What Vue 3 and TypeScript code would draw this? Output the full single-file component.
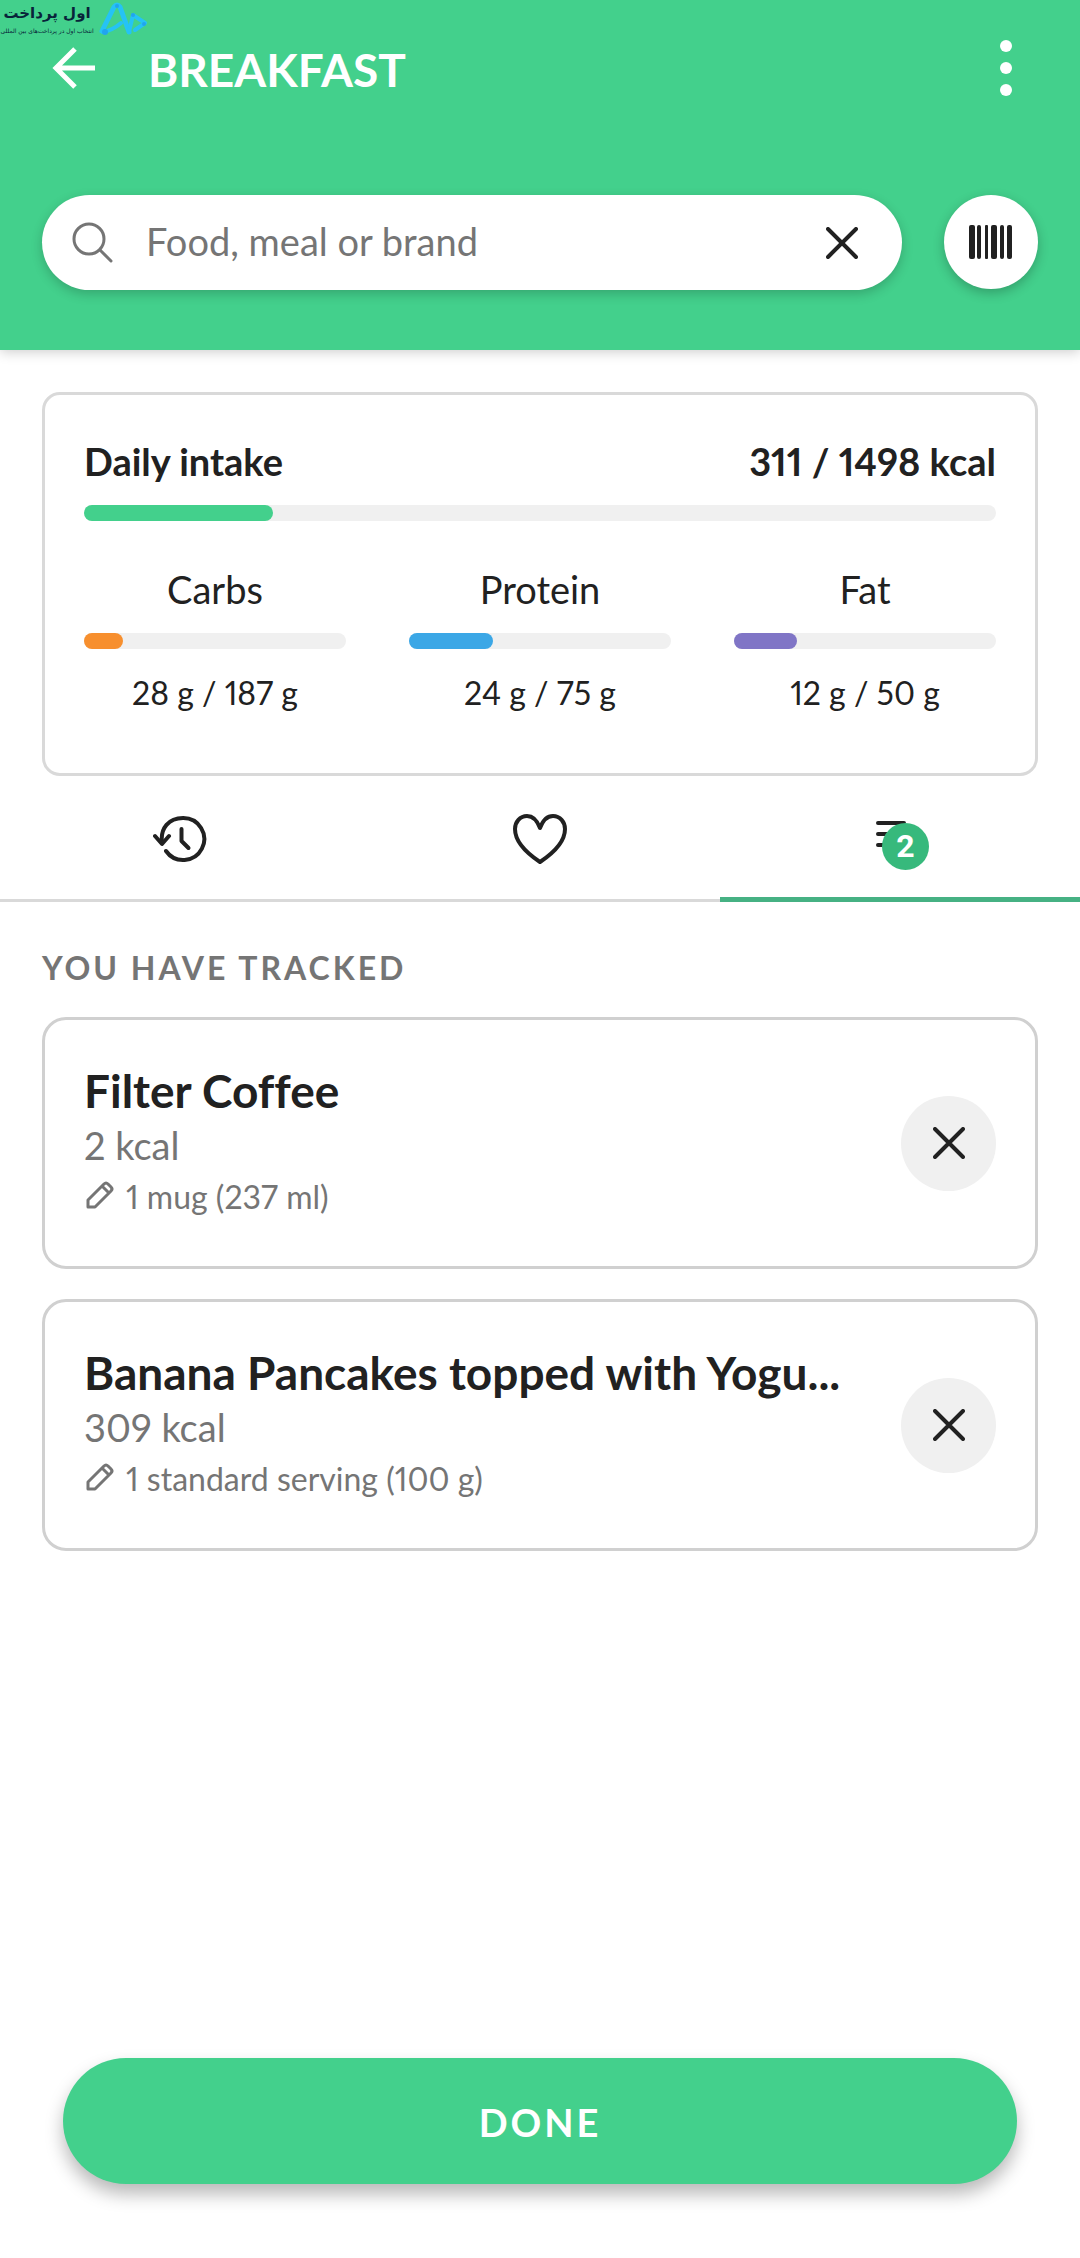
<script setup lang="ts">
import { ref } from 'vue'

interface Macro {
  name: string
  eaten: number
  goal: number
  color: string
}

interface TrackedItem {
  id: number
  title: string
  kcal: number
  amount: string
}

const query = ref('')
const energy = { eaten: 311, goal: 1498 }

const macros: Macro[] = [
  { name: 'Carbs', eaten: 28, goal: 187, color: '#f78f2e' },
  { name: 'Protein', eaten: 24, goal: 75, color: '#3ba7e6' },
  { name: 'Fat', eaten: 12, goal: 50, color: '#8075c6' },
]

const items = ref<TrackedItem[]>([
  { id: 1, title: 'Filter Coffee', kcal: 2, amount: '1 mug (237 ml)' },
  { id: 2, title: 'Banana Pancakes topped with Yogu...', kcal: 309, amount: '1 standard serving (100 g)' },
])

const percent = (eaten: number, goal: number): string => `${(eaten / goal) * 100}%`

const remove = (id: number): void => {
  items.value = items.value.filter((item) => item.id !== id)
}
</script>

<template>
  <div class="screen">
    <header class="header">
      <div class="brand" dir="rtl" lang="fa">
        <div class="brand-text">
          <span class="brand-name">اول پرداخت</span>
          <span class="brand-tag">انتخاب اول در پرداخت‌های بین المللی</span>
        </div>
        <svg class="brand-mark" viewBox="0 0 52 36" aria-hidden="true">
          <g fill="none" stroke="#25c3f5" stroke-linecap="round" stroke-linejoin="round">
            <path d="M4 31 L16 7 Q19 3 22 7 L31 32" stroke-width="5" />
            <path d="M5 32 Q15 30 23 23" stroke-width="4" />
            <path d="M31 32 L35 15 L47 23 L37 30" stroke-width="4" />
          </g>
          <g fill="#22a4ee">
            <circle cx="7" cy="32" r="3" />
            <circle cx="19" cy="6" r="2" />
            <circle cx="35" cy="15" r="2" />
            <circle cx="46" cy="24" r="2" />
          </g>
        </svg>
      </div>

      <div class="app-bar">
        <button class="plain" type="button" aria-label="Back">
          <svg width="48" height="48" viewBox="0 0 48 48" fill="none" stroke="#fff" stroke-width="5">
            <path d="M25 5 L6 24 L25 43 M6 24 H45" />
          </svg>
        </button>
        <h1 class="title">BREAKFAST</h1>
        <button class="plain" type="button" aria-label="More options">
          <svg width="24" height="60" viewBox="0 0 24 60" fill="#fff">
            <circle cx="12" cy="8" r="6" />
            <circle cx="12" cy="30" r="6" />
            <circle cx="12" cy="52" r="6" />
          </svg>
        </button>
      </div>

      <div class="search-row">
        <div class="search">
          <svg width="42" height="42" viewBox="0 0 42 42" fill="none" stroke="#757575" stroke-width="3" stroke-linecap="round">
            <circle cx="17" cy="17" r="15" />
            <path d="M28 28 L39 39" />
          </svg>
          <input v-model="query" class="search-input" type="text" placeholder="Food, meal or brand" aria-label="Search food" />
          <button class="plain" type="button" aria-label="Clear" @click="query = ''">
            <svg width="32" height="32" viewBox="0 0 32 32" fill="none" stroke="#212121" stroke-width="4" stroke-linecap="round">
              <path d="M2 2 L30 30 M30 2 L2 30" />
            </svg>
          </button>
        </div>
        <button class="scan" type="button" aria-label="Scan barcode">
          <svg width="44" height="36" viewBox="0 0 44 36" fill="#212121">
            <rect x="0" y="1" width="6" height="34" rx="2" />
            <rect x="8" y="1" width="4" height="34" rx="2" />
            <rect x="16" y="1" width="3" height="34" rx="1" />
            <rect x="22" y="1" width="6" height="34" rx="2" />
            <rect x="31" y="1" width="4" height="34" rx="2" />
            <rect x="38" y="1" width="5" height="34" rx="2" />
          </svg>
        </button>
      </div>
    </header>

    <section class="intake">
      <div class="intake-head">
        <span>Daily intake</span>
        <span>{{ energy.eaten }} / {{ energy.goal }} kcal</span>
      </div>
      <div class="track">
        <div class="fill" :style="{ width: percent(energy.eaten, energy.goal) }"></div>
      </div>
      <div class="macros">
        <div v-for="macro in macros" :key="macro.name" class="macro">
          <span class="macro-name">{{ macro.name }}</span>
          <div class="track">
            <div class="fill" :style="{ width: percent(macro.eaten, macro.goal), background: macro.color }"></div>
          </div>
          <span class="macro-amount">{{ macro.eaten }} g / {{ macro.goal }} g</span>
        </div>
      </div>
    </section>

    <nav class="tabs">
      <button class="tab" type="button" aria-label="Recent">
        <svg width="54" height="48" viewBox="0 0 54 48" fill="none" stroke="#212121" stroke-width="4" stroke-linecap="round" stroke-linejoin="round">
          <path d="M9 28 C7 13 16 3 30 3 A21 21 0 1 1 13 36" />
          <path d="M2 21 L9 29 L16 21" />
          <path d="M28.500 14 V26 L35.500 33" />
        </svg>
      </button>
      <button class="tab" type="button" aria-label="Favourites">
        <svg width="54" height="50" viewBox="0 0 54 50" fill="none" stroke="#212121" stroke-width="4" stroke-linejoin="round">
          <path d="M27 14 C24 6 20 2 14 2 C7 2 2 8 2 15 C2 30 18 42 27 48 C36 42 52 30 52 15 C52 8 47 2 40 2 C34 2 30 6 27 14 Z" />
        </svg>
      </button>
      <button class="tab active" type="button" aria-label="Tracked">
        <span class="list-icon">
          <svg width="48" height="48" viewBox="0 0 48 48" fill="none" stroke="#212121" stroke-width="4" stroke-linecap="round">
            <path d="M2 8 H28 M2 19 H28 M2 30 H20" />
          </svg>
          <span class="badge">{{ items.length }}</span>
        </span>
      </button>
    </nav>

    <main class="tracked">
      <h2 class="section-title">YOU HAVE TRACKED</h2>
      <ul class="list">
        <li v-for="item in items" :key="item.id" class="item">
          <div class="item-text">
            <h3 class="item-title">{{ item.title }}</h3>
            <p class="item-kcal">{{ item.kcal }} kcal</p>
            <p class="item-amount">
              <svg width="32" height="32" viewBox="0 0 32 32" fill="none" stroke="#757575" stroke-width="3" stroke-linejoin="round">
                <path d="M4 28 V21 L20 5 Q22 3 24 5 L27 8 Q29 10 27 12 L11 28 Z M18 7 L25 14" />
              </svg>
              {{ item.amount }}
            </p>
          </div>
          <button class="remove" type="button" :aria-label="`Remove ${item.title}`" @click="remove(item.id)">
            <svg width="32" height="32" viewBox="0 0 32 32" fill="none" stroke="#212121" stroke-width="4" stroke-linecap="round">
              <path d="M2 2 L30 30 M30 2 L2 30" />
            </svg>
          </button>
        </li>
      </ul>
    </main>

    <footer class="footer">
      <button class="done" type="button">DONE</button>
    </footer>
  </div>
</template>

<style>
body {
  margin: 0;
  background: #fff;
}
</style>

<style scoped>
* {
  box-sizing: border-box;
}

.screen {
  display: flex;
  flex-direction: column;
  min-height: 100vh;
  background: #fff;
  color: #212121;
  font-family: Lato, "Open Sans", sans-serif;
  font-size: 38px;
  font-variant-ligatures: none;
  font-variant-numeric: proportional-nums;
  line-height: 44px;
}

svg {
  display: block;
  flex: none;
}

button {
  font: inherit;
  border: 0;
  cursor: pointer;
}

.plain {
  padding: 0;
  background: none;
}

.header {
  position: relative;
  padding-bottom: 60px;
  background: #43d08c;
  box-shadow: 0 2px 12px rgba(0, 0, 0, 0.2);
}

.brand {
  position: absolute;
  top: 0;
  left: 0;
  display: flex;
  flex-direction: row-reverse;
  gap: 4px;
  color: #08233a;
  font-family: "DejaVu Sans", sans-serif;
  white-space: nowrap;
}

.brand-text {
  display: flex;
  flex-direction: column;
  align-items: center;
  width: 94px;
}

.brand-name {
  font-size: 15px;
  font-weight: 700;
  line-height: 26px;
}

.brand-tag {
  font-size: 6px;
  line-height: 10px;
}

.brand-mark {
  width: 52px;
  height: 36px;
}

.app-bar {
  display: flex;
  align-items: center;
  height: 136px;
  padding: 0 62px 0 50px;
}

.title {
  flex: 1;
  margin: 0;
  padding: 4px 0 0 50px;
  color: #fff;
  font-size: 46px;
  font-weight: 700;
  line-height: 54px;
}

.search-row {
  display: flex;
  gap: 42px;
  margin-top: 59px;
  padding: 0 42px;
}

.search {
  display: flex;
  flex: 1;
  align-items: center;
  height: 95px;
  padding: 0 44px 0 30px;
  border-radius: 48px;
  background: #fff;
  box-shadow: 0 4px 12px rgba(0, 0, 0, 0.2);
}

.search-input {
  flex: 1;
  min-width: 0;
  padding: 0 32px 4px;
  border: 0;
  outline: 0;
  background: none;
  color: #212121;
  font: inherit;
}

.search-input::placeholder {
  color: #757575;
  opacity: 1;
}

.scan {
  display: flex;
  align-items: center;
  justify-content: center;
  width: 94px;
  height: 94px;
  padding: 0;
  border-radius: 50%;
  background: #fff;
  box-shadow: 0 4px 12px rgba(0, 0, 0, 0.24);
}

.intake {
  margin: 42px 42px 0;
  padding: 44px 39px 62px;
  border: 3px solid #d9d9d9;
  border-radius: 18px;
}

.intake-head {
  display: flex;
  justify-content: space-between;
  margin-bottom: 22px;
  font-weight: 700;
}

.track {
  height: 16px;
  border-radius: 8px;
  background: #f0f0f0;
}

.fill {
  height: 16px;
  border-radius: 8px;
  background: #43d08c;
}

.macros {
  display: grid;
  grid-template-columns: repeat(3, 1fr);
  gap: 63px;
  margin-top: 46px;
  text-align: center;
}

.macro-name {
  display: block;
  margin-bottom: 22px;
}

.macro-amount {
  display: block;
  margin-top: 26px;
  font-size: 32px;
  line-height: 36px;
}

.tabs {
  display: grid;
  grid-template-columns: repeat(3, 1fr);
  height: 126px;
}

.tab {
  display: flex;
  align-items: center;
  justify-content: center;
  padding: 0;
  background: none;
  box-shadow: inset 0 -3px #d9d9d9;
}

.tab.active {
  box-shadow: inset 0 -5px #46b183;
}

.list-icon {
  position: relative;
}

.badge {
  position: absolute;
  top: 8px;
  left: 6px;
  width: 47px;
  height: 47px;
  border-radius: 50%;
  background: #37b97c;
  color: #fff;
  font-family: Roboto, sans-serif;
  font-size: 32px;
  font-weight: 700;
  line-height: 46px;
  text-align: center;
}

.tracked {
  padding: 48px 42px;
}

.section-title {
  margin: 0;
  color: #757575;
  font-size: 32px;
  font-weight: 700;
  line-height: 36px;
  letter-spacing: 3px;
}

.list {
  display: flex;
  flex-direction: column;
  gap: 30px;
  margin: 31px 0 0;
  padding: 0;
  list-style: none;
}

.item {
  display: flex;
  align-items: center;
  gap: 48px;
  padding: 0 39px;
  border: 3px solid #d0d0d0;
  border-radius: 24px;
}

.item-text {
  flex: 1;
  min-width: 0;
  padding: 44px 0 51px;
}

.item-title {
  overflow: hidden;
  margin: 0;
  font-size: 46px;
  font-weight: 700;
  line-height: 54px;
  text-overflow: ellipsis;
  white-space: nowrap;
}

.item-kcal {
  margin: 5px 0 12px;
  color: #757575;
}

.item-amount {
  display: flex;
  gap: 10px;
  margin: 0;
  color: #757575;
  font-size: 32px;
  line-height: 36px;
}

.remove {
  display: flex;
  flex: none;
  align-items: center;
  justify-content: center;
  width: 95px;
  height: 95px;
  padding: 0;
  border-radius: 50%;
  background: #f0f0f0;
}

.footer {
  margin-top: auto;
  padding: 0 63px 74px;
}

.done {
  width: 100%;
  height: 126px;
  padding: 2px 0 0;
  border-radius: 63px;
  background: #43d08c;
  box-shadow: 0 10px 18px rgba(0, 0, 0, 0.28);
  color: #fff;
  font-weight: 700;
  letter-spacing: 3px;
}
</style>
